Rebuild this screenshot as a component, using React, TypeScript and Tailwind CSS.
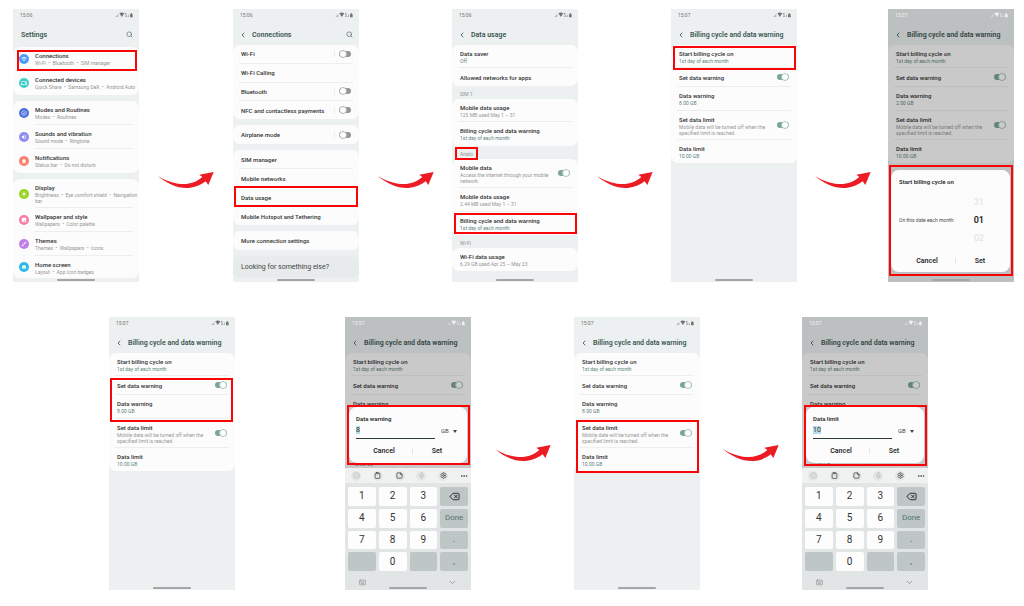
import { useId, type ReactNode } from 'react'
import clsx from 'clsx'
import type { IconType } from 'react-icons'
import {
  MdBrush,
  MdDevices,
  MdHome,
  MdImage,
  MdLightMode,
  MdNotifications,
  MdTaskAlt,
  MdVolumeUp,
  MdWifi,
} from 'react-icons/md'
import {
  ChevronDown,
  ChevronLeft,
  Clipboard,
  Delete,
  Ellipsis,
  Keyboard as KeyboardIcon,
  Mic,
  Search,
  Settings,
  Smile,
  StickyNote,
} from 'lucide-react'

function StatusBar({ time, dim }: { time: string; dim?: boolean }) {
  return (
    <div
      className={clsx(
        'flex h-[12px] items-center justify-between pl-[7px] pr-[6px] text-[5px] leading-[6px]',
        dim ? 'text-[#eef0f0]' : 'text-[#6f7675]'
      )}
    >
      {/* stays light above the scrim */}
      <span className={clsx(dim && 'relative z-10')}>{time}</span>
      <svg
        width="18"
        height="6"
        viewBox="0 0 54 18"
        fill="currentColor"
        aria-hidden="true"
        className={clsx(dim && 'relative z-10')}
      >
        <path d="M1 15 L10 5 V15 Z" opacity="0.45" />
        <path d="M13 4 Q20 -1 28 4 L20.500 15 Z" />
        <path d="M30 3 h5 v2 h-3 v3 h3 v7 h-5 v-2 h3 v-3 h-3 Z" opacity="0.7" />
        <path d="M37 15 L42 5 V15 Z" opacity="0.5" />
        <path d="M47 4 h4 v3 h2 v9 h-8 V7 h2 Z" />
      </svg>
    </div>
  )
}

function Header({ title, back = true, search }: { title: string; back?: boolean; search?: boolean }) {
  return (
    <div className="flex h-[24px] items-center pl-[6px] pr-[6px] pt-[3px] text-[#3b5652]">
      {back && (
        <button aria-label="Back" className="mr-[5px]">
          <ChevronLeft size={8} strokeWidth={2.5} />
        </button>
      )}
      <h2 className={clsx('flex-1 whitespace-nowrap text-[7px] font-semibold leading-[10px]', !back && 'ml-[2px]')}>
        {title}
      </h2>
      {search && (
        <button aria-label="Search">
          <Search size={7} strokeWidth={2} />
        </button>
      )}
    </div>
  )
}

type PhoneProps = {
  time: string
  title: string
  back?: boolean
  search?: boolean
  dim?: boolean
  children: ReactNode
  overlay?: ReactNode
}

function Phone({ time, title, back, search, dim, children, overlay }: PhoneProps) {
  return (
    <section className="relative h-[273px] w-[126px] shrink-0 bg-[#edf0f0]">
      <StatusBar time={time} dim={dim} />
      <Header title={title} back={back} search={search} />
      {children}
      {dim && <div className="absolute inset-0 bg-black/20" />}
      {overlay}
      <div className="absolute bottom-[1px] left-1/2 h-[2px] w-[38px] -translate-x-1/2 rounded-full bg-[#a3a6a6]" />
    </section>
  )
}

function Card({ className, children }: { className?: string; children: ReactNode }) {
  return <div className={clsx('flex flex-col rounded-[7px] bg-[#fcfcfc] px-[6px]', className)}>{children}</div>
}

function Toggle({ id, on }: { id: string; on?: boolean }) {
  return (
    <input
      id={id}
      type="checkbox"
      role="switch"
      defaultChecked={on}
      className="mr-[2px] flex h-[6px] w-[12px] shrink-0 appearance-none items-center rounded-full bg-[#949494] before:size-[8px] before:shrink-0 before:rounded-full before:border before:border-[#b5b5b5] before:bg-white checked:justify-end checked:bg-[#7ba59c] checked:before:border-[#a9c6c0]"
    />
  )
}

type RowProps = {
  title: string
  sub?: string
  accent?: boolean
  toggle?: 'on' | 'off'
  split?: boolean
  className: string
}

function Row({ title, sub, accent, toggle, split, className }: RowProps) {
  const id = useId()
  const text = (
    <>
      <span className="block whitespace-nowrap text-[6px] font-medium leading-[9px] text-[#333]">{title}</span>
      {sub && (
        <span
          className={clsx(
            'block whitespace-pre text-[5px] leading-[6px]',
            accent ? 'text-[#5c857e]' : 'text-[#969696]'
          )}
        >
          {sub}
        </span>
      )}
    </>
  )
  const base = clsx(
    'flex w-full border-b border-[#eeeeee] pl-[2px] text-left last:border-b-0',
    sub ? 'items-start pt-[4px]' : 'items-center',
    className
  )

  if (!toggle) {
    return (
      <button className={base}>
        <span className="block">{text}</span>
      </button>
    )
  }
  return (
    <div className={base}>
      <label htmlFor={id} className="w-0 flex-1">
        {text}
      </label>
      <div className={clsx('flex items-center', sub && 'self-stretch pb-[4px]')}>
        {split && <span className="mr-[4px] h-[7px] w-px bg-[#eeeeee]" />}
        <Toggle id={id} on={toggle === 'on'} />
      </div>
    </div>
  )
}

function IconRow({
  icon: Icon,
  color,
  title,
  sub,
  className = 'h-[24px]',
}: {
  icon: IconType
  color: string
  title: string
  sub: string
  className?: string
}) {
  return (
    <button className={clsx('group flex items-center text-left', className)}>
      <span className={clsx('mr-[6px] flex size-[10px] shrink-0 items-center justify-center rounded-full text-white', color)}>
        <Icon size={6} />
      </span>
      <span className="block h-full w-0 flex-1 border-b border-[#eeeeee] pt-[4px] group-last:border-b-0">
        <span className="block whitespace-nowrap text-[6px] font-medium leading-[9px] text-[#333]">{title}</span>
        <span className="block whitespace-pre text-[5px] leading-[6px] text-[#969696]">{sub}</span>
      </span>
    </button>
  )
}

function SectionLabel({ children }: { children: ReactNode }) {
  return <h3 className="h-[13px] pl-[8px] pt-[5px] text-[5px] leading-[6px] text-[#8d9392]">{children}</h3>
}

// Red frame around the part of the screen to tap
function Mark({ className }: { className: string }) {
  return <div className={clsx('pointer-events-none absolute border-2 border-[#fa0505]', className)} />
}

function Arrow({ className }: { className: string }) {
  return (
    <div className={clsx('flex basis-0 items-center justify-center', className)}>
      <svg width="56" height="17" viewBox="0 0 168 51" fill="#ed1c24" aria-hidden="true" className="shrink-0">
        <path d="M0 12 C28 36 60 50 92 48 C114 46 131 38 143 28 L151 39 L167 0 L124 8 L133 15 C116 30 94 38 70 36 C44 34 20 25 0 12 Z" />
      </svg>
    </div>
  )
}

function BillingCard({ warning = '8.00 GB' }: { warning?: string }) {
  return (
    <Card>
      <Row className="h-[23px]" title="Start billing cycle on" sub="1st day of each month" accent />
      <Row className="h-[19px]" title="Set data warning" toggle="on" />
      <Row className="h-[24px]" title="Data warning" sub={warning} accent />
      <Row
        className="h-[29px]"
        title="Set data limit"
        sub={'Mobile data will be turned off when the\nspecified limit is reached.'}
        toggle="on"
      />
      <Row className="h-[23px]" title="Data limit" sub="10.00 GB" accent />
    </Card>
  )
}

function DialogActions() {
  return (
    <div className="flex items-center text-[7px] font-semibold leading-[10px] text-[#2b2b2b]">
      <button className="w-[56px]">Cancel</button>
      <span className="h-[6px] w-px bg-[#e6e6e6]" />
      <button className="w-[48px]">Set</button>
    </div>
  )
}

function DateDialog() {
  return (
    <div
      role="dialog"
      aria-label="Start billing cycle on"
      className="absolute bottom-[10px] left-[3px] right-[4px] flex h-[102px] flex-col rounded-[8px] bg-[#fcfcfc] pb-[6px] pl-[8px] pt-[7px]"
    >
      <h3 className="text-[6px] font-semibold leading-[9px] text-[#2b2b2b]">Start billing cycle on</h3>
      <div className="flex flex-1 items-center pb-[2px]">
        <span className="flex-1 whitespace-nowrap text-[5px] leading-[6px] text-[#4a4a4a]">On this date each month:</span>
        <div className="mr-[26px] flex flex-col text-[9px] leading-[18px]">
          <button className="text-[#e0e0e0]">31</button>
          <span className="font-semibold text-[#222]">01</span>
          <button className="text-[#e0e0e0]">02</button>
        </div>
      </div>
      <DialogActions />
    </div>
  )
}

function AmountDialog({ title, value }: { title: string; value: string }) {
  return (
    <div
      role="dialog"
      aria-label={title}
      className="absolute left-[4px] right-[4px] top-[90px] h-[56px] rounded-[8px] bg-[#fcfcfc] pl-[7px] pt-[7px]"
    >
      <h3 className="text-[6px] font-semibold leading-[9px] text-[#2b2b2b]">{title}</h3>
      <div className="mb-[7px] flex items-center">
        <div className="flex h-[16px] w-[79px] border-b border-[#2e3b3a] pt-[3px]">
          <input
            aria-label={title}
            defaultValue={value}
            className="h-[8px] bg-[#b9dcec] text-[7px] leading-[8px] text-[#333] [field-sizing:content]"
          />
        </div>
        <select
          aria-label="Unit"
          defaultValue="GB"
          className="ml-[6px] w-[12px] appearance-none text-[6px] leading-[8px] text-[#444]"
        >
          <option>GB</option>
          <option>MB</option>
        </select>
        <svg width="4" height="3" viewBox="0 0 4 3" fill="#444" aria-hidden="true">
          <path d="M0 0 H4 L2 3 Z" />
        </svg>
      </div>
      <DialogActions />
    </div>
  )
}

const tools = [
  { icon: Smile, label: 'Emoji', faint: true },
  { icon: Clipboard, label: 'Clipboard' },
  { icon: StickyNote, label: 'Notes' },
  { icon: Mic, label: 'Voice input', faint: true },
  { icon: Settings, label: 'Keyboard settings' },
]

const keys = ['1', '2', '3', 'del', '4', '5', '6', 'Done', '7', '8', '9', '.', '', '0', '', ',']

function Keypad() {
  return (
    <div className="absolute inset-x-0 bottom-0 top-[151px] flex flex-col bg-[#e1e5e5]">
      <div className="flex h-[15px] items-center justify-between bg-[#f0f2f2] pl-[6px] pr-[3px]">
        {tools.map(({ icon: Icon, label, faint }) => (
          <button
            key={label}
            aria-label={label}
            className={clsx(
              'flex size-[10px] items-center justify-center rounded-full bg-[#e4e6e6]',
              faint ? 'text-[#bcbfbf]' : 'text-[#444]'
            )}
          >
            <Icon size={7} strokeWidth={2.5} />
          </button>
        ))}
        <button aria-label="More" className="text-[#444]">
          <Ellipsis size={8} strokeWidth={2.5} />
        </button>
      </div>
      <div className="mt-[4px] grid h-[84px] grid-cols-4 grid-rows-4 gap-[3px] px-[3px]">
        {keys.map((k, i) => (
          <button
            key={i}
            aria-label={k === 'del' ? 'Delete' : k || 'Blank'}
            className={clsx(
              'flex items-center justify-center rounded-[2px] leading-[12px]',
              /^\d$/.test(k) ? 'bg-[#fdfdfd] text-[10px] text-[#222]' : 'bg-[#bfc6c6] text-[8px]',
              k === 'Done' ? 'text-[#51756f]' : 'text-[#333]'
            )}
          >
            {k === 'del' ? <Delete size={11} strokeWidth={2} className="text-[#222]" /> : k}
          </button>
        ))}
      </div>
      <div className="flex flex-1 items-center justify-between px-[14px] pt-[3px] text-[#888]">
        <button aria-label="Switch keyboard">
          <KeyboardIcon size={7} strokeWidth={2} />
        </button>
        <button aria-label="Hide keyboard">
          <ChevronDown size={9} strokeWidth={2} />
        </button>
      </div>
    </div>
  )
}

const BILLING = 'Billing cycle and data warning'

export default function App() {
  return (
    <main className="bg-white pt-[9px] pb-[16px] font-[Roboto,'Liberation_Sans',sans-serif]">
      <div className="flex pl-[13px] pr-[10px]">
        {/* Settings */}
        <Phone
          time="15:06"
          title="Settings"
          back={false}
          search
          overlay={<Mark className="left-[4px] top-[41px] h-[21px] w-[120px]" />}
        >
          <div className="flex flex-col gap-[6px] pt-[2px]">
            <Card>
              <IconRow icon={MdWifi} color="bg-[#4a9cf5]" title="Connections" sub="Wi-Fi  •  Bluetooth  •  SIM manager" />
              <IconRow
                icon={MdDevices}
                color="bg-[#43cdc6]"
                title="Connected devices"
                sub="Quick Share  •  Samsung DeX  •  Android Auto"
              />
            </Card>
            <Card>
              <IconRow icon={MdTaskAlt} color="bg-[#4c72de]" title="Modes and Routines" sub="Modes  •  Routines" />
              <IconRow icon={MdVolumeUp} color="bg-[#908cf4]" title="Sounds and vibration" sub="Sound mode  •  Ringtone" />
              <IconRow icon={MdNotifications} color="bg-[#fb7f70]" title="Notifications" sub="Status bar  •  Do not disturb" />
            </Card>
            <Card>
              <IconRow
                className="h-[29px]"
                icon={MdLightMode}
                color="bg-[#97d41c]"
                title="Display"
                sub={'Brightness  •  Eye comfort shield  •  Navigation\nbar'}
              />
              <IconRow icon={MdImage} color="bg-[#f57ba2]" title="Wallpaper and style" sub="Wallpapers  •  Color palette" />
              <IconRow icon={MdBrush} color="bg-[#c07de8]" title="Themes" sub="Themes  •  Wallpapers  •  Icons" />
              <IconRow
                className="h-[22px]"
                icon={MdHome}
                color="bg-[#2bbbe5]"
                title="Home screen"
                sub="Layout  •  App icon badges"
              />
            </Card>
          </div>
        </Phone>

        <Arrow className="grow-[94] pt-[70px]" />

        {/* Connections */}
        <Phone
          time="15:06"
          title="Connections"
          search
          overlay={<Mark className="left-[1px] top-[177px] h-[21px] w-[124px]" />}
        >
          <div className="flex flex-col gap-[6px]">
            <Card className="h-[74px]">
              <Row className="flex-1" title="Wi-Fi" toggle="off" split />
              <Row className="flex-1" title="Wi-Fi Calling" />
              <Row className="flex-1" title="Bluetooth" toggle="off" split />
              <Row className="flex-1" title="NFC and contactless payments" toggle="off" split />
            </Card>
            <Card className="h-[19px]">
              <Row className="flex-1" title="Airplane mode" toggle="off" split />
            </Card>
            <Card className="h-[75px]">
              <Row className="flex-1" title="SIM manager" />
              <Row className="flex-1" title="Mobile networks" />
              <Row className="flex-1" title="Data usage" />
              <Row className="flex-1" title="Mobile Hotspot and Tethering" />
            </Card>
            <Card className="h-[19px]">
              <Row className="flex-1" title="More connection settings" />
            </Card>
            <div className="flex h-[22px] items-center rounded-[7px] bg-[#e7ebec] pl-[8px] text-[7px] leading-[9px] text-[#444]">
              Looking for something else?
            </div>
          </div>
        </Phone>

        <Arrow className="grow-[93] pt-[70px]" />

        {/* Data usage */}
        <Phone
          time="15:06"
          title="Data usage"
          overlay={
            <>
              <Mark className="left-[3px] top-[138px] h-[13px] w-[23px]" />
              <Mark className="left-[2px] top-[204px] h-[21px] w-[123px]" />
            </>
          }
        >
          <Card>
            <Row className="h-[23px]" title="Data saver" sub="Off" accent />
            <Row className="h-[18px]" title="Allowed networks for apps" />
          </Card>
          <SectionLabel>SIM 1</SectionLabel>
          <Card>
            <Row className="h-[23px]" title="Mobile data usage" sub="125 MB used May 1 – 31" />
            <Row className="h-[24px]" title={BILLING} sub="1st day of each month" accent />
          </Card>
          <SectionLabel>Airalo</SectionLabel>
          <Card>
            <Row
              className="h-[29px]"
              title="Mobile data"
              sub={'Access the internet through your mobile\nnetwork.'}
              toggle="on"
            />
            <Row className="h-[24px]" title="Mobile data usage" sub="2.44 MB used May 1 – 31" />
            <Row className="h-[23px]" title={BILLING} sub="1st day of each month" accent />
          </Card>
          <SectionLabel>Wi-Fi</SectionLabel>
          <Card>
            <Row className="h-[23px]" title="Wi-Fi data usage" sub="6.29 GB used Apr 25 – May 23" />
          </Card>
        </Phone>

        <Arrow className="grow-[93] pt-[70px]" />

        {/* Billing cycle */}
        <Phone time="15:07" title={BILLING} overlay={<Mark className="left-[2px] top-[37px] h-[24px] w-[123px]" />}>
          <BillingCard />
        </Phone>

        <Arrow className="grow-[91] pt-[70px]" />

        <Phone
          time="15:07"
          title={BILLING}
          dim
          overlay={
            <>
              <DateDialog />
              <Mark className="left-[1px] top-[156px] h-[111px] w-[124px]" />
            </>
          }
        >
          <BillingCard warning="2.00 GB" />
        </Phone>
      </div>

      <div className="mt-[35px] flex pl-[109px] pr-[96px]">
        {/* Data warning */}
        <Phone time="15:07" title={BILLING} overlay={<Mark className="left-[1px] top-[61px] h-[44px] w-[123px]" />}>
          <BillingCard />
        </Phone>

        <div className="grow-[110] basis-0" />

        <Phone
          time="15:07"
          title={BILLING}
          dim
          overlay={
            <>
              <AmountDialog title="Data warning" value="8" />
              <Keypad />
              <Mark className="left-[2px] top-[88px] h-[60px] w-[123px]" />
            </>
          }
        >
          <BillingCard />
        </Phone>

        <Arrow className="grow-[103]" />

        {/* Data limit */}
        <Phone time="15:07" title={BILLING} overlay={<Mark className="left-[2px] top-[103px] h-[53px] w-[123px]" />}>
          <BillingCard />
        </Phone>

        <Arrow className="grow-[102]" />

        <Phone
          time="15:07"
          title={BILLING}
          dim
          overlay={
            <>
              <AmountDialog title="Data limit" value="10" />
              <Keypad />
              <Mark className="left-[2px] top-[88px] h-[61px] w-[123px]" />
            </>
          }
        >
          <BillingCard />
        </Phone>
      </div>
    </main>
  )
}
